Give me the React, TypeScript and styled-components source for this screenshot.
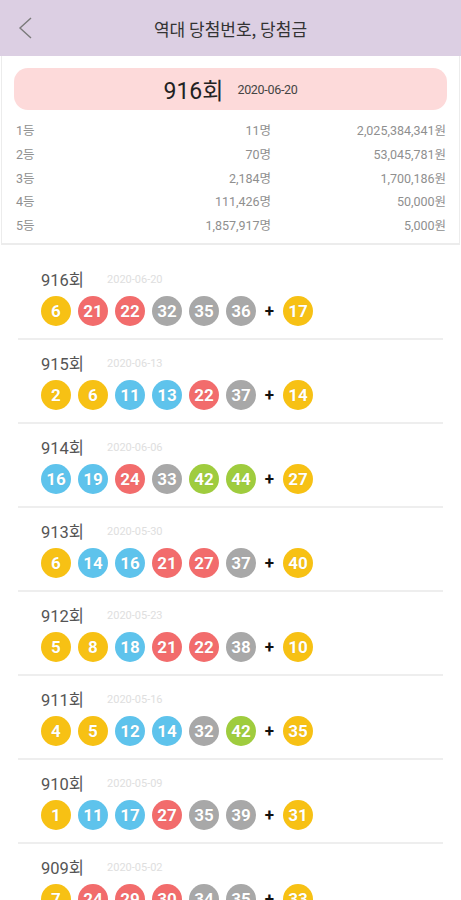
import React from "react";
import styled, { createGlobalStyle } from "styled-components";

const Global = createGlobalStyle`
  html, body { margin: 0; padding: 0; background: #ffffff; }
  body { font-family: Roboto, "Noto Sans CJK KR", "Noto Sans", sans-serif; }
  * { box-sizing: border-box; }
`;

const Page = styled.div`
  width: 461px;
  height: 900px;
  overflow: hidden;
  background: #fff;
`;

const Header = styled.header`
  height: 56px;
  background: #dccfe3;
  display: grid;
  grid-template-columns: 56px 1fr 56px;
  align-items: center;
`;

const Back = styled.div`
  display: flex;
  align-items: center;
  justify-content: center;
  padding-right: 6px;
`;

const Title = styled.h1`
  margin: 0;
  font-size: 17px;
  font-weight: 400;
  color: #333;
  text-align: center;
  font-family: "Noto Sans CJK KR", sans-serif;
`;

const Summary = styled.section`
  margin: 0 1px;
  border: 1px solid #ececec;
  border-top: none;
  border-bottom: 2px solid #ececec;
  padding: 12px 12px 7px;
  background: #fff;
`;

const Pill = styled.div`
  height: 42px;
  border-radius: 14px;
  background: #fddada;
  display: flex;
  align-items: center;
  justify-content: center;
  gap: 14px;
  margin-bottom: 8px;
`;

const PillRound = styled.span`
  font-size: 23px;
  color: #222;
  font-family: Roboto, "Noto Sans CJK KR", sans-serif;
`;

const PillDate = styled.span`
  font-size: 12.5px;
  color: #444;
  letter-spacing: -0.3px;
`;

const PrizeRow = styled.div`
  display: grid;
  grid-template-columns: 60px 1fr 175px;
  height: 23.7px;
  align-items: center;
  font-size: 12.5px;
  color: #8f8f8f;
  padding: 0 1px 0 2px;
  font-family: Roboto, "Noto Sans CJK KR", sans-serif;
`;

const Right = styled.span`
  text-align: right;
`;

const List = styled.div`
  margin: 11px 18px 0;
`;

const Item = styled.div`
  padding: 13px 0 12px 23px;
  border-bottom: 2px solid #eeeeee;
`;

const ItemHead = styled.div`
  height: 20px;
  display: flex;
  align-items: center;
  gap: 23px;
  margin-bottom: 7px;
`;

const ItemRound = styled.span`
  font-size: 16.5px;
  color: #555;
`;

const ItemDate = styled.span`
  font-size: 11px;
  color: #dedede;
`;

const Balls = styled.div`
  display: flex;
  align-items: center;
  gap: 7px;
  height: 30px;
`;

const Ball = styled.div<{ $bg: string }>`
  width: 30px;
  height: 30px;
  border-radius: 50%;
  background: ${(p) => p.$bg};
  color: #fff;
  font-weight: 700;
  font-size: 17px;
  display: flex;
  align-items: center;
  justify-content: center;
  font-family: Roboto, sans-serif;
  text-shadow: 0 0 1px rgba(0, 0, 0, 0.15);
`;

const Plus = styled.span`
  width: 13px;
  text-align: center;
  font-size: 17px;
  font-weight: 700;
  color: #111;
  font-family: Roboto, sans-serif;
`;

const YELLOW = "#f7c114";
const color = (n: number) =>
  n <= 10 ? YELLOW : n <= 20 ? "#5ec3ec" : n <= 30 ? "#f26c6c" : n <= 40 ? "#a8a8a8" : "#9fcc3e";

const prizes = [
  ["1등", "11명", "2,025,384,341원"],
  ["2등", "70명", "53,045,781원"],
  ["3등", "2,184명", "1,700,186원"],
  ["4등", "111,426명", "50,000원"],
  ["5등", "1,857,917명", "5,000원"],
];

const draws: { r: number; d: string; n: number[]; b: number }[] = [
  { r: 916, d: "2020-06-20", n: [6, 21, 22, 32, 35, 36], b: 17 },
  { r: 915, d: "2020-06-13", n: [2, 6, 11, 13, 22, 37], b: 14 },
  { r: 914, d: "2020-06-06", n: [16, 19, 24, 33, 42, 44], b: 27 },
  { r: 913, d: "2020-05-30", n: [6, 14, 16, 21, 27, 37], b: 40 },
  { r: 912, d: "2020-05-23", n: [5, 8, 18, 21, 22, 38], b: 10 },
  { r: 911, d: "2020-05-16", n: [4, 5, 12, 14, 32, 42], b: 35 },
  { r: 910, d: "2020-05-09", n: [1, 11, 17, 27, 35, 39], b: 31 },
  { r: 909, d: "2020-05-02", n: [7, 24, 29, 30, 34, 35], b: 33 },
];

export default function App() {
  return (
    <Page>
      <Global />
      <Header>
        <Back>
          <svg width="16" height="24" viewBox="0 0 16 24">
            <polyline points="14,2 3,12 14,22" fill="none" stroke="#7a7a7a" strokeWidth="1.4" />
          </svg>
        </Back>
        <Title>역대 당첨번호, 당첨금</Title>
        <div />
      </Header>
      <Summary>
        <Pill>
          <PillRound>916회</PillRound>
          <PillDate>2020-06-20</PillDate>
        </Pill>
        {prizes.map((p) => (
          <PrizeRow key={p[0]}>
            <span>{p[0]}</span>
            <Right>{p[1]}</Right>
            <Right>{p[2]}</Right>
          </PrizeRow>
        ))}
      </Summary>
      <List>
        {draws.map((d) => (
          <Item key={d.r}>
            <ItemHead>
              <ItemRound>{d.r}회</ItemRound>
              <ItemDate>{d.d}</ItemDate>
            </ItemHead>
            <Balls>
              {d.n.map((n) => (
                <Ball key={n} $bg={color(n)}>{n}</Ball>
              ))}
              <Plus>+</Plus>
              <Ball $bg={YELLOW}>{d.b}</Ball>
            </Balls>
          </Item>
        ))}
      </List>
    </Page>
  );
}
